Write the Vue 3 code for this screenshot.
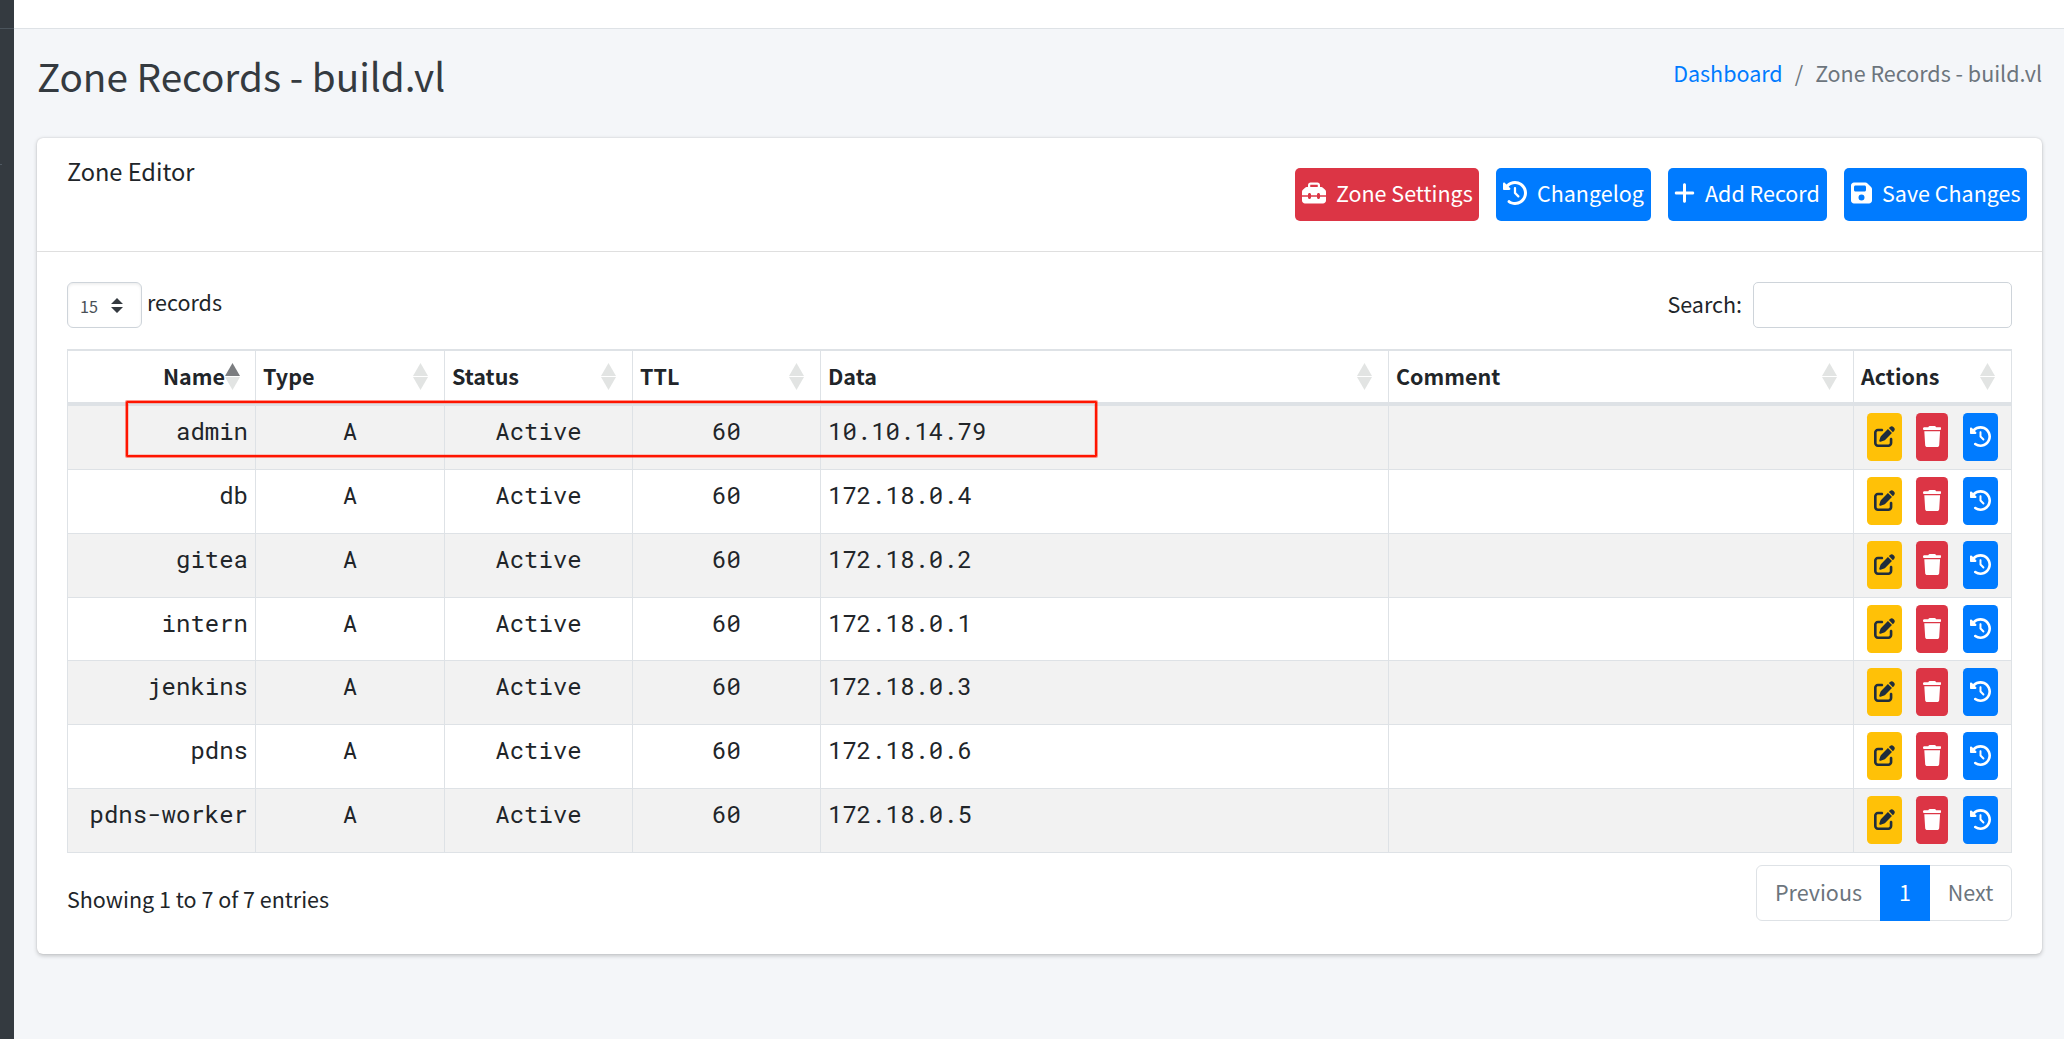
<template>
  <div class="wrapper">
    <aside class="sidebar">
      <div class="brand"></div>
      <div class="user-panel"></div>
    </aside>
    <div class="main">
      <nav class="navbar"></nav>
      <header class="content-header">
        <h1>Zone Records - build.vl</h1>
        <ol class="breadcrumb">
          <li><a href="#">Dashboard</a></li>
          <li class="slash">/</li>
          <li>Zone Records - build.vl</li>
        </ol>
      </header>

      <section class="card">
        <div class="card-header">
          <h3>Zone Editor</h3>
          <div class="toolbar">
            <button
              v-for="btn in toolbar"
              :key="btn.label"
              type="button"
              class="btn"
              :class="[btn.color, btn.icon]"
            >
              <svg :viewBox="icons[btn.icon].box"><path :d="icons[btn.icon].d" /></svg>
              <span>{{ btn.label }}</span>
            </button>
          </div>
        </div>

        <div class="card-body">
          <div class="controls">
            <div class="length">
              <div class="select">
                <span>15</span>
                <svg viewBox="0 0 12 15"><path d="M6 0l6 6H0zM6 15L0 9h12z" /></svg>
              </div>
              <label>records</label>
            </div>
            <div class="filter">
              <label>Search:</label>
              <input type="text" />
            </div>
          </div>

          <div class="table">
            <div class="row head">
              <div v-for="col in columns" :key="col" class="cell" :class="col.toLowerCase()">
                <span>{{ col }}</span>
                <svg class="sort" viewBox="0 0 15 27">
                  <path :class="{ active: col === sortBy }" d="M7.5 0L15 13H0z" />
                  <path d="M0 14h15L7.500 27z" />
                </svg>
              </div>
            </div>
            <div v-for="rec in records" :key="rec.name" class="row">
              <div class="cell name">{{ rec.name }}</div>
              <div class="cell mid">A</div>
              <div class="cell mid">Active</div>
              <div class="cell mid">60</div>
              <div class="cell">{{ rec.data }}</div>
              <div class="cell"></div>
              <div class="cell actions">
                <button
                  v-for="act in actions"
                  :key="act.icon"
                  type="button"
                  class="btn-sm"
                  :class="[act.color, act.icon]"
                >
                  <svg :viewBox="icons[act.icon].box"><path :d="icons[act.icon].d" /></svg>
                </button>
              </div>
            </div>
            <div class="highlight"></div>
          </div>

          <div class="footer">
            <div class="info">Showing 1 to 7 of 7 entries</div>
            <ul class="pagination">
              <li class="prev">Previous</li>
              <li class="current">1</li>
              <li class="next">Next</li>
            </ul>
          </div>
        </div>
      </section>
    </div>
  </div>
</template>

<script setup>
import { ref } from 'vue';

const sortBy = ref('Name');
const columns = ['Name', 'Type', 'Status', 'TTL', 'Data', 'Comment', 'Actions'];

const records = ref([
  { name: 'admin', data: '10.10.14.79' },
  { name: 'db', data: '172.18.0.4' },
  { name: 'gitea', data: '172.18.0.2' },
  { name: 'intern', data: '172.18.0.1' },
  { name: 'jenkins', data: '172.18.0.3' },
  { name: 'pdns', data: '172.18.0.6' },
  { name: 'pdns-worker', data: '172.18.0.5' }
]);

const toolbar = [
  { label: 'Zone Settings', icon: 'toolbox', color: 'danger' },
  { label: 'Changelog', icon: 'history', color: 'primary' },
  { label: 'Add Record', icon: 'plus', color: 'primary' },
  { label: 'Save Changes', icon: 'save', color: 'primary' }
];

const actions = [
  { icon: 'edit', color: 'warning' },
  { icon: 'trash', color: 'danger' },
  { icon: 'history', color: 'primary' }
];

const icons = {
  toolbox: {
    box: '0 0 512 512',
    d: 'M176 88v40H336V88c0-4.400-3.600-8-8-8H184c-4.400 0-8 3.600-8 8zm-48 40V88c0-30.900 25.100-56 56-56H328c30.900 0 56 25.100 56 56v40h28.100c12.700 0 24.900 5.100 33.900 14.100l51.900 51.900c9 9 14.100 21.200 14.100 33.900V304H384V288c0-17.700-14.300-32-32-32s-32 14.300-32 32v16H192V288c0-17.700-14.300-32-32-32s-32 14.300-32 32v16H0V227.900c0-12.700 5.100-24.900 14.100-33.900l51.900-51.900c9-9 21.200-14.100 33.900-14.100H128zM0 416V336H128v16c0 17.700 14.300 32 32 32s32-14.300 32-32V336H320v16c0 17.700 14.300 32 32 32s32-14.300 32-32V336H512v80c0 35.300-28.700 64-64 64H64c-35.300 0-64-28.700-64-64z'
  },
  history: {
    box: '0 0 512 512',
    d: 'M75 75L41 41C25.900 25.900 0 36.600 0 57.900V168c0 13.300 10.700 24 24 24H134.100c21.400 0 32.100-25.900 17-41l-30.800-30.800C155 85.500 203 64 256 64c106 0 192 86 192 192s-86 192-192 192c-40.800 0-78.600-12.700-109.700-34.400c-14.500-10.100-34.400-6.600-44.600 7.900s-6.600 34.400 7.900 44.600C151.200 495 201.700 512 256 512c141.400 0 256-114.600 256-256S397.400 0 256 0C185.300 0 121.300 28.700 75 75zm181 53c-13.300 0-24 10.700-24 24V256c0 6.400 2.500 12.500 7 17l72 72c9.400 9.400 24.600 9.400 33.900 0s9.400-24.600 0-33.900l-65-65V152c0-13.300-10.700-24-24-24z'
  },
  plus: {
    box: '0 0 448 512',
    d: 'M256 80c0-17.700-14.300-32-32-32s-32 14.300-32 32V224H48c-17.700 0-32 14.300-32 32s14.300 32 32 32H192V432c0 17.700 14.300 32 32 32s32-14.300 32-32V288H400c17.700 0 32-14.300 32-32s-14.300-32-32-32H256V80z'
  },
  save: {
    box: '0 0 448 512',
    d: 'M64 32C28.700 32 0 60.700 0 96V416c0 35.300 28.700 64 64 64H384c35.300 0 64-28.700 64-64V173.300c0-17-6.700-33.300-18.700-45.300L352 50.700C340 38.700 323.700 32 306.700 32H64zm0 96c0-17.700 14.300-32 32-32H288c17.700 0 32 14.300 32 32v64c0 17.700-14.300 32-32 32H96c-17.700 0-32-14.300-32-32V128zM224 288a64 64 0 1 1 0 128 64 64 0 1 1 0-128z'
  },
  edit: {
    box: '0 0 512 512',
    d: 'M471.600 21.700c-21.900-21.900-57.300-21.900-79.200 0L362.300 51.700l97.900 97.900 30.100-30.100c21.900-21.900 21.900-57.300 0-79.200L471.600 21.700zm-299.200 220c-6.100 6.100-10.800 13.600-13.500 21.900l-29.600 88.800c-2.900 8.600-.6 18.100 5.800 24.600s15.900 8.700 24.600 5.800l88.800-29.600c8.200-2.700 15.700-7.400 21.900-13.500L437.700 172.300 339.700 74.300 172.400 241.700zM96 64C43 64 0 107 0 160V416c0 53 43 96 96 96H352c53 0 96-43 96-96V320c0-17.700-14.300-32-32-32s-32 14.300-32 32v96c0 17.700-14.300 32-32 32H96c-17.700 0-32-14.300-32-32V160c0-17.700 14.300-32 32-32h96c17.700 0 32-14.300 32-32s-14.300-32-32-32H96z'
  },
  trash: {
    box: '0 0 448 512',
    d: 'M135.200 17.700L128 32H32C14.300 32 0 46.300 0 64S14.300 96 32 96H416c17.700 0 32-14.300 32-32s-14.300-32-32-32H320l-7.200-14.300C307.400 6.800 296.300 0 284.200 0H163.800c-12.100 0-23.200 6.800-28.600 17.700zM416 128H32L53.200 467c1.600 25.300 22.600 45 47.900 45H346.900c25.300 0 46.300-19.700 47.900-45L416 128z'
  }
};
</script>

<style>
body {
  margin: 0;
  background: #f4f6f9;
}
</style>

<style scoped>
.wrapper {
  display: flex;
  height: 1039px;
  overflow: hidden;
  font-family: 'Source Sans Pro', 'Noto Sans CJK SC', sans-serif;
  font-size: 21.5px;
  line-height: 36px;
  color: #212529;
}

.wrapper * {
  box-sizing: border-box;
}

.sidebar {
  width: 14px;
  background: #343a40;
}

.brand {
  height: 29px;
  border-bottom: 1px solid #4b545c;
}

.user-panel {
  width: 2px;
  height: 136px;
  border-bottom: 1px solid #4f5962;
}

.main {
  flex: 1;
  min-width: 0;
}

.navbar {
  height: 29px;
  background: #fff;
  border-bottom: 1px solid #dee2e6;
}

.content-header {
  display: flex;
  justify-content: space-between;
  height: 109px;
  padding: 20px 22px 0 23px;
}

h1 {
  margin: 0;
  font-size: 38.7px;
  font-weight: 400;
  line-height: 52px;
  color: #343a40;
}

.breadcrumb {
  display: flex;
  gap: 12px;
  margin: 6px 0 0;
  padding: 0;
  list-style: none;
  color: #6c757d;
}

.breadcrumb a {
  color: #007bff;
  text-decoration: none;
}

.card {
  height: 816px;
  margin: 0 22px 0 23px;
  background: #fff;
  border-radius: 6px;
  box-shadow: 0 0 1.5px rgba(0, 0, 0, 0.125), 0 1.5px 4.5px rgba(0, 0, 0, 0.2);
}

.card-header {
  display: flex;
  justify-content: space-between;
  height: 114px;
  padding: 15px 15px 0 30px;
  border-bottom: 1px solid #dfdfdf;
}

h3 {
  margin: 0;
  font-size: 23.6px;
  font-weight: 400;
}

.toolbar {
  display: flex;
  gap: 17px;
  padding-top: 15px;
}

.btn {
  display: flex;
  gap: 10px;
  width: 155px;
  height: 53px;
  padding: 7px 0 0 7px;
  border: 0;
  border-radius: 5px;
  font: inherit;
  color: #fff;
  white-space: nowrap;
}

.btn svg {
  height: 24px;
  margin-top: 6px;
  fill: currentColor;
}

.btn.toolbox {
  width: 184px;
}

.btn.plus {
  width: 159px;
  padding-left: 6px;
}

.btn.save {
  width: 183px;
}

.danger {
  background: #dc3545;
  color: #fff;
}

.primary {
  background: #007bff;
  color: #fff;
}

.warning {
  background: #ffc107;
  color: #1f2d3d;
}

.card-body {
  padding: 30px 30px 0;
}

.controls {
  display: flex;
  justify-content: space-between;
  height: 67px;
}

.length,
.filter {
  display: flex;
}

.select {
  display: flex;
  gap: 13px;
  width: 75px;
  height: 46px;
  margin-right: 5px;
  padding: 5px 0 0 12px;
  border: 1px solid #ced4da;
  border-radius: 6px;
  box-shadow: inset 0 1.5px 3px rgba(0, 0, 0, 0.075);
  font-size: 16.2px;
  color: #495057;
}

.select svg {
  width: 12px;
  height: 15px;
  margin-top: 10px;
  fill: #343a40;
}

.filter {
  gap: 11px;
}

.filter label {
  padding-top: 4px;
}

.length label {
  padding-top: 2px;
}

.filter input {
  width: 259px;
  height: 46px;
  border: 1px solid #ced4da;
  border-radius: 5px;
  background: #fff;
}

.table {
  position: relative;
  width: 1945px;
  border-top: 2px solid #dee2e6;
  border-left: 1px solid #dee2e6;
}

.row {
  display: grid;
  grid-template-columns: 188px 189px 188px 188px 568px 465px 158px;
  height: 63.85px;
  border-bottom: 1px solid #dee2e6;
  font-family: 'Roboto Mono', 'DejaVu Sans Mono', monospace;
  font-size: 24px;
}

.row:nth-child(even) {
  background: #f2f2f2;
}

.head {
  height: 55px;
  border-bottom-width: 4px;
  font-family: inherit;
  font-size: 21.5px;
  font-weight: 700;
}

.cell {
  padding: 7px 7px 0;
  border-right: 1px solid #dee2e6;
}

.mid {
  text-align: center;
}

.name {
  text-align: right;
}

.head .cell {
  display: flex;
  justify-content: space-between;
  padding: 7px 16px 0 7px;
}

.head .name {
  justify-content: flex-end;
  padding-right: 15px;
}

.sort {
  width: 15px;
  height: 27px;
  margin-top: 5px;
  fill: #e2e4e3;
}

.sort .active {
  fill: #7b7d80;
}

.row:not(.head) .actions {
  display: flex;
  padding: 7px 0 0 13px;
}

.btn-sm {
  display: flex;
  align-items: center;
  justify-content: center;
  flex: none;
  width: 35px;
  height: 48px;
  margin-right: 15px;
  padding: 0;
  border: 0;
  border-radius: 4.5px;
}

.btn-sm.edit {
  margin-right: 14px;
}

.btn-sm.trash {
  width: 32px;
}

.btn-sm svg {
  height: 21px;
  margin-bottom: 1px;
  fill: currentColor;
}

/* frame around the first record */
.highlight {
  position: absolute;
  top: 50px;
  left: 58px;
  width: 971px;
  height: 56px;
  border: 2px solid #ff1500;
  border-radius: 1px;
  box-shadow: 0 0 0 1px rgba(255, 21, 0, 0.45), inset 0 0 0 1px rgba(255, 21, 0, 0.2);
}

.footer {
  display: flex;
  justify-content: space-between;
  padding-top: 12px;
}

.info {
  padding-top: 16px;
}

.pagination {
  display: flex;
  width: 256px;
  height: 56px;
  margin: 0;
  padding: 0;
  border: 1px solid #dee2e6;
  border-radius: 6px;
  list-style: none;
  line-height: 52px;
  text-align: center;
  color: #6c757d;
}

.pagination .prev {
  width: 123px;
}

.pagination .current {
  width: 50px;
  margin: -1px 0;
  padding-top: 1px;
  background: #007bff;
  color: #fff;
}

.pagination .next {
  flex: 1;
}
</style>
